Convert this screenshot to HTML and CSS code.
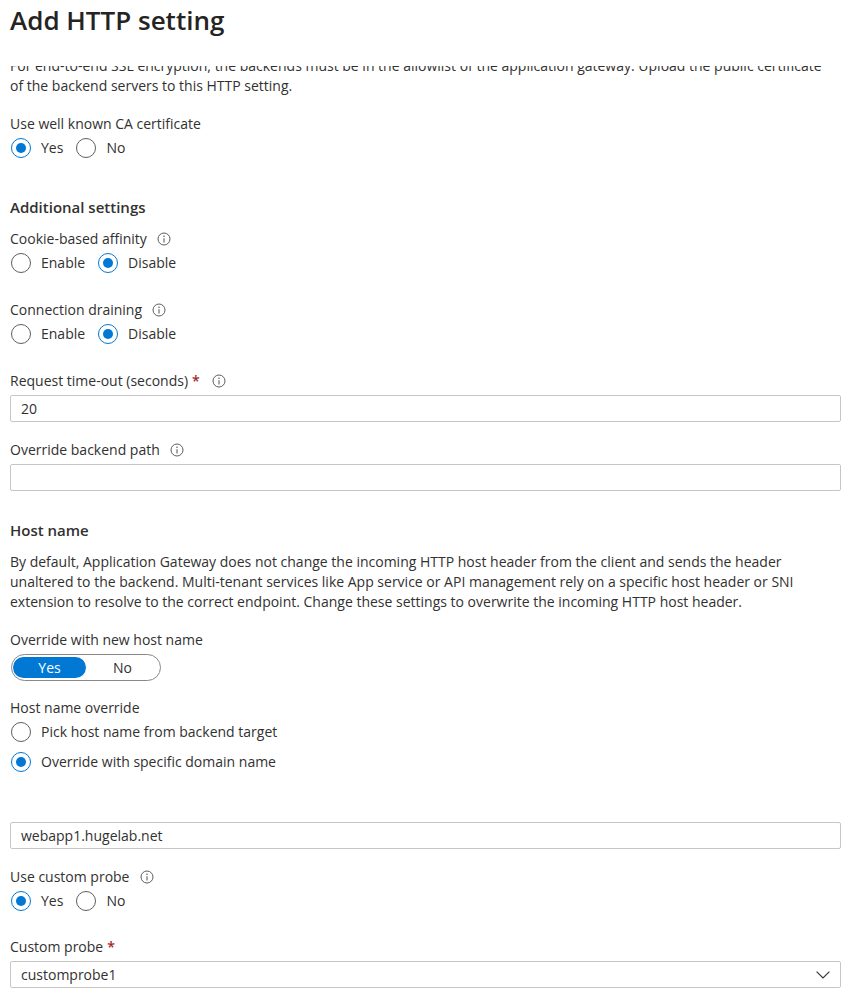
FILE: index.html
```html
<!DOCTYPE html>
<html lang="en">
<head>
	<meta charset="UTF-8">
<link rel="stylesheet" href="styles.css">
</head>
<body>
<div class="page">
	<div class="header">
		<h1>Add HTTP setting</h1>
	</div>

	<div class="scroll">
	<div class="scroll-inner">
		<p class="intro">For end-to-end SSL encryption, the backends must be in the allowlist of the application gateway. Upload the public certificate<br>of the backend servers to this HTTP setting.</p>

		<div class="field f-ca">
			<div class="label">Use well known CA certificate</div>
			<div class="radios">
				<label class="radio"><span class="dot on"></span>Yes</label>
				<label class="radio"><span class="dot"></span>No</label>
			</div>
		</div>

		<h2 class="section s-additional">Additional settings</h2>

		<div class="field f-first">
			<div class="label">Cookie-based affinity<svg class="info" viewBox="0 0 14 14" width="14" height="14"><circle cx="7" cy="7" r="6" fill="none" stroke="#605e5c"/><path d="M7 6.2v4.2" stroke="#605e5c" stroke-width="1.1"/><circle cx="7" cy="4.3" r="0.8" fill="#605e5c"/></svg></div>
			<div class="radios">
				<label class="radio"><span class="dot"></span>Enable</label>
				<label class="radio"><span class="dot on"></span>Disable</label>
			</div>
		</div>

		<div class="field f-gap">
			<div class="label">Connection draining<svg class="info" viewBox="0 0 14 14" width="14" height="14"><circle cx="7" cy="7" r="6" fill="none" stroke="#605e5c"/><path d="M7 6.2v4.2" stroke="#605e5c" stroke-width="1.1"/><circle cx="7" cy="4.3" r="0.8" fill="#605e5c"/></svg></div>
			<div class="radios">
				<label class="radio"><span class="dot"></span>Enable</label>
				<label class="radio"><span class="dot on"></span>Disable</label>
			</div>
		</div>

		<div class="field f-gap">
			<div class="label">Request time-out (seconds)<span class="req">*</span><svg class="info info-req" viewBox="0 0 14 14" width="14" height="14"><circle cx="7" cy="7" r="6" fill="none" stroke="#605e5c"/><path d="M7 6.2v4.2" stroke="#605e5c" stroke-width="1.1"/><circle cx="7" cy="4.3" r="0.8" fill="#605e5c"/></svg></div>
			<input class="text-input" type="text" value="20">
		</div>

		<div class="field f-input">
			<div class="label">Override backend path<svg class="info" viewBox="0 0 14 14" width="14" height="14"><circle cx="7" cy="7" r="6" fill="none" stroke="#605e5c"/><path d="M7 6.2v4.2" stroke="#605e5c" stroke-width="1.1"/><circle cx="7" cy="4.3" r="0.8" fill="#605e5c"/></svg></div>
			<input class="text-input" type="text" value="">
		</div>

		<h2 class="section s-host">Host name</h2>

		<p class="desc">By default, Application Gateway does not change the incoming HTTP host header from the client and sends the header unaltered to the backend. Multi-tenant services like App service or API management rely on a specific host header or SNI extension to resolve to the correct endpoint. Change these settings to overwrite the incoming HTTP host header.</p>

		<div class="field f-input">
			<div class="label">Override with new host name</div>
			<div class="toggle">
				<span class="opt sel">Yes</span>
				<span class="opt">No</span>
			</div>
		</div>

		<div class="field f-toggle">
			<div class="label">Host name override</div>
			<div class="radios stack">
				<label class="radio"><span class="dot"></span>Pick host name from backend target</label>
				<label class="radio"><span class="dot on"></span>Override with specific domain name</label>
			</div>
		</div>

		<input class="text-input domain" type="text" value="webapp1.hugelab.net">

		<div class="field f-input">
			<div class="label">Use custom probe<svg class="info" viewBox="0 0 14 14" width="14" height="14"><circle cx="7" cy="7" r="6" fill="none" stroke="#605e5c"/><path d="M7 6.2v4.2" stroke="#605e5c" stroke-width="1.1"/><circle cx="7" cy="4.3" r="0.8" fill="#605e5c"/></svg></div>
			<div class="radios">
				<label class="radio"><span class="dot on"></span>Yes</label>
				<label class="radio"><span class="dot"></span>No</label>
			</div>
		</div>

		<div class="field f-probe">
			<div class="label">Custom probe<span class="req">*</span></div>
			<div class="select">
				<span>customprobe1</span>
				<svg class="chevron" width="14" height="8" viewBox="0 0 14 8"><path d="M0.6 0.6 L7 7 L13.4 0.6" fill="none" stroke="#323130" stroke-width="1.1"/></svg>
			</div>
		</div>
	</div>
	</div>
</div>
</body>
</html>
```

FILE: styles.css
```css
*{ margin:0; padding:0; box-sizing:border-box; }
body{ background:#fff; color:#323130; font-family:"Open Sans","Noto Sans",sans-serif; font-size:14px; line-height:20px; }

.page{ padding:0 21px 0 10px; height:999px; overflow:hidden; }

.header{ height:66px; background:#fff; }
.header h1{ font-size:26px; font-weight:600; line-height:36px; padding-top:2px; color:#252423; }

/* content is scrolled a little under the header */
.scroll{ height:933px; overflow:hidden; }
.scroll-inner{ margin-top:-10px; }

.intro{ white-space:nowrap; }

.label{ display:flex; align-items:center; height:20px; margin-bottom:4px; }
.info{ margin-left:10px; }
.info-req{ margin-left:12px; }
.req{ color:#a4262c; margin-left:4px; font-weight:600; }

.field.f-ca{ margin-top:18px; }
.field.f-first{ margin-top:11px; }
.field.f-gap{ margin-top:27px; }
.field.f-input{ margin-top:18px; }
.field.f-toggle{ margin-top:17px; }
.field.f-probe{ margin-top:26px; }

.section{ font-size:15px; font-weight:600; line-height:22px; }
.s-additional{ margin-top:38px; }
.s-host{ margin-top:28px; }
.desc{ margin-top:11px; }

.radios{ display:flex; gap:13px; padding-left:1px; }
.radios.stack{ flex-direction:column; gap:10px; }
.radio{ display:flex; align-items:center; height:20px; }
.dot{ width:20px; height:20px; border:1px solid #605e5c; border-radius:50%; margin-right:10px; display:flex; align-items:center; justify-content:center; }
.dot.on{ border-color:#0078d4; }
.dot.on::after{ content:""; width:10px; height:10px; border-radius:50%; background:#0078d4; }

.text-input{ display:block; width:100%; height:27px; border:1px solid #c8c6c4; border-radius:2px; padding:0 10px; font-family:inherit; font-size:14px; color:#323130; background:#fff; outline:none; }
.text-input.domain{ margin-top:50px; }

.toggle{ display:flex; width:150px; height:27px; border:1px solid #8a8886; border-radius:14px; padding:2px 1px; margin-left:1px; }
.toggle .opt{ flex:1; display:flex; align-items:center; justify-content:center; border-radius:11px; line-height:20px; }
.toggle .opt.sel{ background:#0078d4; color:#fff; }

.select{ display:flex; align-items:center; justify-content:space-between; height:27px; border:1px solid #c8c6c4; border-radius:2px; padding:0 10px; }
.chevron{ display:block; }
```
